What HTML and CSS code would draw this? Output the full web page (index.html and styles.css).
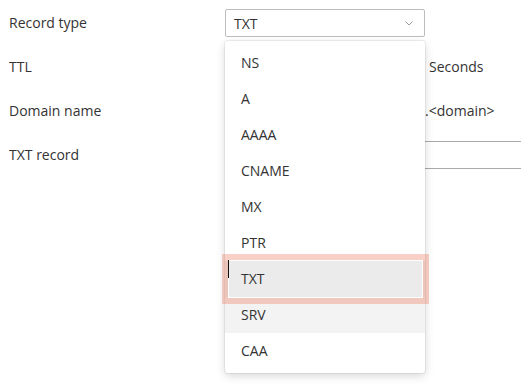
FILE: index.html
```html
<!DOCTYPE html>
<html>
<head>
    <meta charset="utf-8" />
    <title>DNS record</title>
    <link rel="stylesheet" href="styles.css">
</head>
<body>

<div class="form">
    <div class="row">
        <label class="label">Record type</label>
        <div class="select-wrap">
            <div class="select">
                <span>TXT</span>
                <svg class="chevron" width="8" height="5" viewBox="0 0 8 5"><path d="M0.5 0.5 L4 4 L7.5 0.5" fill="none" stroke="#9a9a9a" stroke-width="1"/></svg>
            </div>
            <ul class="menu">
                <li class="item">NS</li>
                <li class="item">A</li>
                <li class="item">AAAA</li>
                <li class="item">CNAME</li>
                <li class="item">MX</li>
                <li class="item">PTR</li>
                <li class="item selected">TXT</li>
                <li class="item hover">SRV</li>
                <li class="item">CAA</li>
                <div class="focus-ring"></div>
                <div class="caret"></div>
            </ul>
        </div>
    </div>
    <div class="row">
        <label class="label">TTL</label>
        <div class="control">
            <div class="input"></div>
            <span class="suffix gap">Seconds</span>
        </div>
    </div>
    <div class="row">
        <label class="label">Domain name</label>
        <div class="control">
            <div class="input"></div>
            <span class="suffix">.&lt;domain&gt;</span>
        </div>
    </div>
    <div class="row">
        <label class="label">TXT record</label>
        <div class="control">
            <div class="input wide"></div>
        </div>
    </div>
</div>

</body>
</html>
```

FILE: styles.css
```css
body, html {
    margin: 0;
    padding: 0;
    width: 100%;
    height: 100%;
    overflow: hidden;
    background: #fff;
    font-family: "Open Sans", "Noto Sans", sans-serif;
    font-size: 14px;
    color: #333;
}
.form {
    padding: 1px 9px 0;
}
.row {
    display: grid;
    grid-template-columns: 216px 1fr;
    align-items: center;
    height: 44px;
}
.label {
    line-height: 20px;
}
.select-wrap {
    position: relative;
    width: 200px;
}
.select {
    display: flex;
    align-items: center;
    justify-content: space-between;
    box-sizing: border-box;
    width: 200px;
    height: 28px;
    padding: 0 11px 0 8px;
    border: 1px solid #bdbdbd;
    border-radius: 2px;
}
.chevron {
    display: block;
}
.menu {
    position: absolute;
    top: 32px;
    left: 0;
    z-index: 10;
    width: 200px;
    margin: 0;
    padding: 4px 0;
    list-style: none;
    background: #fff;
    border-radius: 3px;
    box-shadow: 0 0 0 1px rgba(0,0,0,0.06), 0 3px 10px rgba(0,0,0,0.16);
}
.item {
    height: 36px;
    line-height: 36px;
    padding-left: 16px;
}
.item.selected {
    background: #ebebeb;
}
.item.hover {
    background: #f3f3f3;
}
.focus-ring {
    position: absolute;
    left: -3px;
    top: 213px;
    width: 195px;
    height: 38px;
    border: 6px solid rgba(238, 120, 90, 0.35);
    box-shadow: inset 0 0 0 1px #fff;
    pointer-events: none;
}
.caret {
    position: absolute;
    left: 3px;
    top: 219px;
    width: 1px;
    height: 18px;
    background: #111;
}
.control {
    display: flex;
    align-items: center;
}
.input {
    box-sizing: border-box;
    width: 200px;
    height: 28px;
    border: 1px solid #bdbdbd;
    border-radius: 2px;
}
.input.wide {
    flex: 1;
    border-width: 1px 0;
    border-color: #aaa;
    border-radius: 0;
}
.suffix {
    line-height: 20px;
}
.suffix.gap {
    margin-left: 4px;
}
```
